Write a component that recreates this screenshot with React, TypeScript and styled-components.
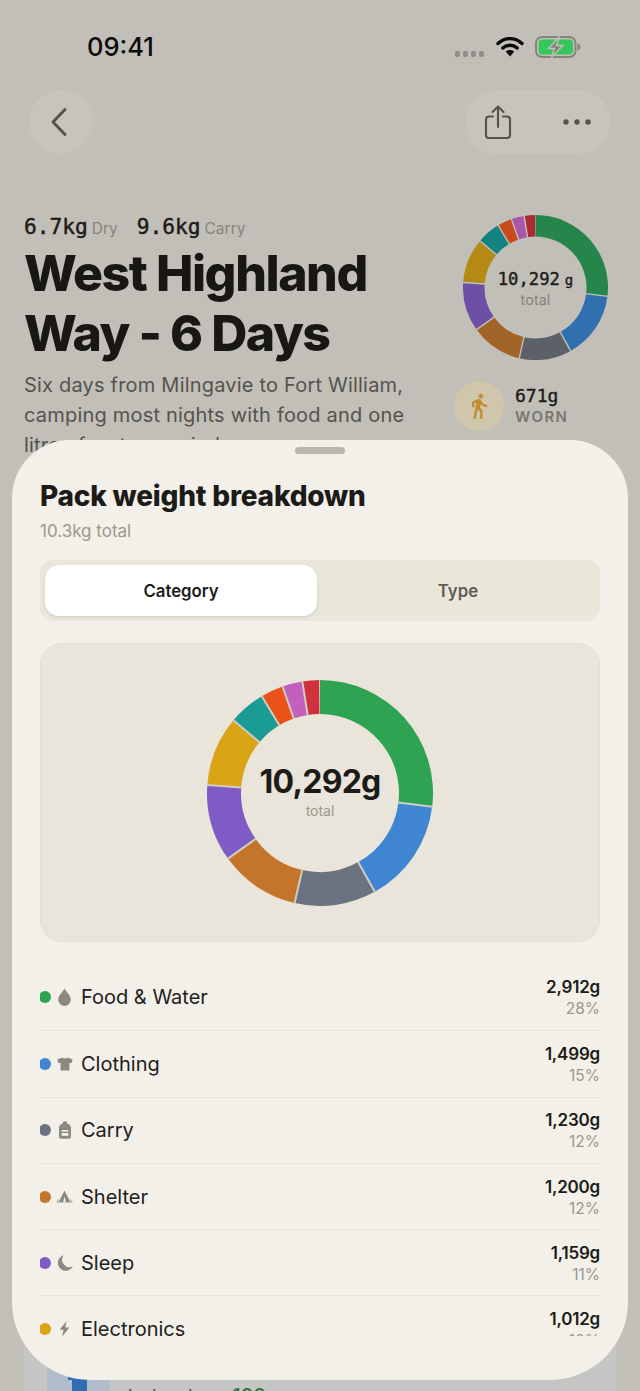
import styled, { createGlobalStyle } from 'styled-components';
import { MdDirectionsWalk } from 'react-icons/md';

const GlobalStyle = createGlobalStyle`
  html, body {
    margin: 0;
    padding: 0;
    background: #c1bfb7;
  }
  * {
    box-sizing: border-box;
  }
`;

const sans = `Inter, "Liberation Sans", sans-serif`;
const mono = `"DejaVu Sans Mono", "Liberation Mono", monospace`;

const Page = styled.div`
  position: relative;
  width: 640px;
  height: 1391px;
  overflow: hidden;
  background: #c1bfb7;
  font-family: ${sans};
  color: #1c1b18;
`;

const StatusBar = styled.div`
  height: 90px;
  display: flex;
  justify-content: space-between;
  align-items: flex-start;
  padding: 31px 59px 0 87px;
`;

const Time = styled.div`
  font-size: 25.5px;
  line-height: 32px;
  font-weight: 500;
  color: #0a0a0a;
`;

const StatusIcons = styled.div`
  display: flex;
  align-items: flex-start;
  gap: 11px;
  padding-top: 5px;
`;

const SignalDots = styled.div`
  display: flex;
  gap: 2.5px;
  margin-top: 15px;
  margin-right: 1px;
  & > span {
    width: 5.5px;
    height: 6px;
    border-radius: 2px;
    background: #8f8d87;
  }
`;

const NavBar = styled.div`
  height: 64px;
  display: flex;
  justify-content: space-between;
  padding: 0 30px 0 29px;
`;

const GlassButton = styled.div`
  height: 64px;
  border-radius: 32px;
  background: #c7c4bd;
  display: flex;
  align-items: center;
`;

const BackButton = styled(GlassButton)`
  width: 64px;
  justify-content: center;
  padding-right: 4px;
`;

const ActionPill = styled(GlassButton)`
  width: 145px;
  justify-content: space-between;
  padding: 0 19px 0 19px;
`;

const Hero = styled.div`
  display: flex;
  margin-top: 61px;
  padding-left: 24px;
`;

const HeroText = styled.div`
  width: 430px;
  flex: none;
`;

const Stats = styled.div`
  display: flex;
  align-items: baseline;
  height: 24px;
  line-height: 24px;
  gap: 19px;
`;

const Stat = styled.div`
  display: flex;
  align-items: baseline;
  gap: 4px;
`;

const StatValue = styled.span`
  font-family: ${mono};
  font-size: 21.2px;
  -webkit-text-stroke: 0.45px #1c1b18;
  color: #1c1b18;
`;

const StatLabel = styled.span`
  font-size: 15.5px;
  color: #86847d;
`;

const Title = styled.h1`
  margin: 5px 0 0;
  font-size: 50px;
  line-height: 59.5px;
  font-weight: 800;
  letter-spacing: -1.45px;
  color: #181713;
`;

const Description = styled.p`
  margin: 7px 0 0;
  width: 400px;
  font-size: 20px;
  line-height: 30px;
  letter-spacing: 0.2px;
  color: #55534e;
`;

const HeroSide = styled.div`
  flex: 1;
  display: flex;
  flex-direction: column;
`;

const SmallChart = styled.div`
  margin-left: 9px;
`;

const Worn = styled.div`
  display: flex;
  align-items: center;
  gap: 11px;
  margin-top: 21px;
`;

const WornBadge = styled.div`
  width: 50px;
  height: 50px;
  border-radius: 50%;
  background: #d0c6ab;
  color: #c08f33;
  display: flex;
  align-items: center;
  justify-content: center;
  font-size: 28px;
`;

const WornWeight = styled.div`
  font-family: ${mono};
  font-size: 18px;
  line-height: 22px;
  -webkit-text-stroke: 0.4px #1c1b18;
  color: #1c1b18;
`;

const WornLabel = styled.div`
  font-size: 15px;
  line-height: 20px;
  font-weight: 600;
  letter-spacing: 1.4px;
  color: #787670;
`;

const GearCard = styled.div`
  margin: 839px 24px 0;
  background: #c5c5c4;
  display: flex;
  gap: 18px;
  padding-left: 23px;
`;

const GearThumb = styled.div`
  width: 63px;
  height: 120px;
  flex: none;
  background: #b1bccc;
  display: flex;
  justify-content: center;
  padding-top: 73px;
`;

const GearName = styled.div`
  margin-top: 85px;
  font-size: 17px;
  line-height: 24px;
  color: #3e3d3a;
  display: flex;
  gap: 19px;
  & > b {
    color: #2f7a49;
    font-weight: 600;
    font-size: 19px;
  }
`;

const Sheet = styled.section`
  position: absolute;
  left: 12px;
  top: 440px;
  width: 616px;
  height: 940px;
  border-radius: 58px 58px 78px 78px;
  background: #f2f0e8;
  padding: 7px 28px 44px;
  display: flex;
  flex-direction: column;
`;

const Handle = styled.div`
  width: 50px;
  height: 7px;
  border-radius: 4px;
  background: #b9b7af;
  align-self: center;
`;

const SheetTitle = styled.h2`
  margin: 24px 0 0;
  font-size: 28px;
  line-height: 36px;
  font-weight: 800;
  letter-spacing: -0.2px;
  color: #1c1b18;
`;

const SheetSub = styled.div`
  margin-top: 6px;
  font-size: 17px;
  line-height: 22px;
  color: #9a988f;
`;

const Segmented = styled.div`
  margin-top: 18px;
  height: 61px;
  border-radius: 14px;
  background: #e9e6da;
  padding: 5px;
  display: flex;
`;

const Segment = styled.div<{ $active?: boolean }>`
  display: flex;
  align-items: center;
  justify-content: center;
  font-size: 16.8px;
  font-weight: 600;
  border-radius: 14px;
  ${(p) =>
    p.$active
      ? `
    width: 272px;
    background: #fff;
    color: #1c1b18;
    box-shadow: 0 1px 3px rgba(70, 60, 30, 0.14);
  `
      : `
    flex: 1;
    padding-left: 4px;
    color: #5e5c55;
  `}
`;

const ChartCard = styled.div`
  margin-top: 22px;
  height: 299px;
  flex: none;
  border-radius: 22px;
  background: #e9e5da;
  border: 1px solid #e2ded1;
  display: flex;
  align-items: center;
  justify-content: center;
`;

const DonutWrap = styled.div<{ $size: number }>`
  display: grid;
  width: ${(p) => p.$size}px;
  height: ${(p) => p.$size}px;
  & > * {
    grid-area: 1 / 1;
  }
`;

const DonutCenter = styled.div`
  display: flex;
  flex-direction: column;
  align-items: center;
  justify-content: center;
`;

const BigTotal = styled.div`
  font-size: 32px;
  line-height: 38px;
  font-weight: 700;
  letter-spacing: -0.8px;
  margin-top: -2px;
  color: #1c1b18;
`;

const BigTotalLabel = styled.div`
  font-size: 14px;
  line-height: 20px;
  color: #9a988f;
`;

const SmallTotal = styled.div`
  font-family: ${mono};
  font-size: 17.2px;
  line-height: 20px;
  -webkit-text-stroke: 0.4px #1c1b18;
  margin-top: 4px;
  color: #1c1b18;
  & > small {
    font-size: 14px;
    margin-left: 5px;
  }
`;

const SmallTotalLabel = styled.div`
  font-size: 14.5px;
  line-height: 20px;
  color: #85837d;
`;

const Breakdown = styled.div`
  margin-top: 22px;
  flex: 1;
  min-height: 0;
  overflow: hidden;
`;

const Row = styled.div`
  height: 66.3px;
  display: flex;
  align-items: center;
  border-top: 1px solid #e8e5dc;
  &:first-child {
    border-top: none;
  }
`;

const Dot = styled.span<{ $color: string }>`
  width: 12px;
  height: 12px;
  margin-left: -1px;
  border-radius: 50%;
  background: ${(p) => p.$color};
  flex: none;
`;

const RowIcon = styled.span`
  width: 17px;
  height: 18px;
  margin-left: 5px;
  flex: none;
  color: #8b8a82;
  display: flex;
  align-items: center;
  justify-content: center;
`;

const RowName = styled.span`
  margin-left: 8px;
  flex: 1;
  font-size: 20px;
  color: #22211d;
`;

const RowValues = styled.div`
  text-align: right;
  padding-top: 2px;
`;

const RowWeight = styled.div`
  font-size: 17px;
  line-height: 22px;
  font-weight: 600;
  letter-spacing: -0.2px;
  color: #1c1b18;
`;

const RowShare = styled.div`
  font-size: 15.5px;
  line-height: 22px;
  color: #9a988f;
`;

type DonutProps = { size: number; hole: number; colors: string[]; gap: string; gapWidth: number };

// angles read off the chart, in degrees from twelve o'clock
const stops = [0, 97, 151, 193, 234.5, 274, 310, 329, 340.6, 351, 359.6];

const polar = (r: number, deg: number, c: number) => {
  const a = ((deg - 90) * Math.PI) / 180;
  return `${(c + r * Math.cos(a)).toFixed(2)} ${(c + r * Math.sin(a)).toFixed(2)}`;
};

function Donut({ size, hole, colors, gap, gapWidth }: DonutProps) {
  const c = size / 2;
  return (
    <svg width={size} height={size} viewBox={`0 0 ${size} ${size}`}>
      {colors.map((color, i) => {
        const from = stops[i];
        const to = stops[i + 1];
        const large = to - from > 180 ? 1 : 0;
        const d = `M${polar(c, from, c)} A${c} ${c} 0 ${large} 1 ${polar(c, to, c)} L${polar(hole, to, c)} A${hole} ${hole} 0 ${large} 0 ${polar(hole, from, c)} Z`;
        return <path key={color} d={d} fill={color} />;
      })}
      {stops.slice(1, -1).map((deg) => {
        return (
          <path
            key={deg}
            d={`M${polar(hole - 0.5, deg, c)} L${polar(c + 0.5, deg, c)}`}
            stroke={gap}
            strokeWidth={gapWidth}
          />
        );
      })}
    </svg>
  );
}

const DropIcon = () => (
  <svg width="13" height="18" viewBox="0 0 13 18">
    <path d="M6.5 0.5C8 3.5 12.8 7.5 12.8 11.6A6.3 6.3 0 0 1 0.2 11.6C0.2 7.5 5 3.5 6.5 0.5Z" fill="currentColor" />
  </svg>
);

const ShirtIcon = () => (
  <svg width="16" height="14" viewBox="0 0 16 14">
    <path d="M5.2 0.5C6 1.7 10 1.7 10.8 0.5L15.6 2.4L14.6 6H12.4V13.5H3.6V6H1.4L0.4 2.4Z" fill="currentColor" />
  </svg>
);

const PackIcon = () => (
  <svg width="12" height="18" viewBox="0 0 12 18">
    <path d="M4 2.4V1.2A2 1 0 0 1 8 1.2V2.4C10.4 2.9 12 4.4 12 6.8V15.5A2.2 2.2 0 0 1 9.8 17.7H2.2A2.2 2.2 0 0 1 0 15.5V6.8C0 4.4 1.6 2.9 4 2.4Z" fill="currentColor" />
    <rect x="2.6" y="9" width="6.8" height="1.6" fill="#f2f0e8" />
    <rect x="2.6" y="12" width="6.8" height="2.8" fill="#f2f0e8" />
  </svg>
);

const TentIcon = () => (
  <svg width="17" height="13" viewBox="0 0 17 13">
    <path d="M8.5 0.5L14.6 12.4H2.4Z" fill="currentColor" />
    <path d="M8.5 6.5L10 12.4H7Z" fill="#f2f0e8" />
    <path d="M3 8.5L0 12.6H2ZM14 8.5L17 12.6H15Z" fill="currentColor" opacity="0.75" />
  </svg>
);

const MoonIcon = () => (
  <svg width="16" height="16" viewBox="0 0 16 16">
    <path d="M6.6 0.2A7.9 7.9 0 1 0 15.9 11.2A7.4 7.4 0 0 1 6.6 0.2Z" fill="currentColor" />
  </svg>
);

const BoltIcon = () => (
  <svg width="11" height="16" viewBox="0 0 11 16">
    <path d="M7.6 0L0.6 8.8H4.6L3 15.8L10.4 6.6H6.2Z" fill="currentColor" />
  </svg>
);

const categories = [
  { name: 'Food & Water', weight: '2,912g', share: '28%', color: '#2ea352', icon: <DropIcon /> },
  { name: 'Clothing', weight: '1,499g', share: '15%', color: '#3f85d1', icon: <ShirtIcon /> },
  { name: 'Carry', weight: '1,230g', share: '12%', color: '#6b7280', icon: <PackIcon /> },
  { name: 'Shelter', weight: '1,200g', share: '12%', color: '#c4752b', icon: <TentIcon /> },
  { name: 'Sleep', weight: '1,159g', share: '11%', color: '#7e5bc5', icon: <MoonIcon /> },
  { name: 'Electronics', weight: '1,012g', share: '10%', color: '#d9a516', icon: <BoltIcon /> },
];

const brightColors = ['#2ea352', '#3f85d1', '#6b7280', '#c4752b', '#7e5bc5', '#d9a516', '#1a9b94', '#ea5219', '#c25fbf', '#cf323c'];
const dimColors = ['#26854a', '#3070ae', '#5c6068', '#a36427', '#6d4fa6', '#b48a14', '#14827f', '#c84a1a', '#a857a8', '#ab2b33'];

export default function App() {
  return (
    <>
      <GlobalStyle />
      <Page>
        <StatusBar>
          <Time>09:41</Time>
          <StatusIcons>
            <SignalDots>
              <span />
              <span />
              <span />
              <span />
            </SignalDots>
            <svg width="28" height="21" viewBox="0 0 28 21">
              <path d="M2 7.5C9 1 19 1 26 7.5" fill="none" stroke="#0a0a0a" strokeWidth="3.4" strokeLinecap="round" />
              <path d="M6.8 12C11 8.3 17 8.3 21.2 12" fill="none" stroke="#0a0a0a" strokeWidth="3.4" strokeLinecap="round" />
              <path d="M9.8 15.6C12 13.6 16 13.6 18.2 15.6L14 20.6Z" fill="#0a0a0a" />
            </svg>
            <svg width="46" height="22" viewBox="0 0 46 22">
              <rect x="1" y="1" width="39.5" height="20" rx="6" fill="none" stroke="#85847e" strokeWidth="2" />
              <rect x="3.6" y="3.6" width="34.4" height="14.8" rx="3.6" fill="#35c75a" />
              <path d="M42.5 7.5C44.5 8 45.5 9.5 45.5 11C45.5 12.5 44.5 14 42.5 14.5Z" fill="#85847e" />
              <path d="M24.5 0.5L13.5 12.5H19.5L16.5 21.5L28 9.5H21.5Z" fill="#85847e" stroke="#c1bfb7" strokeWidth="1.4" />
            </svg>
          </StatusIcons>
        </StatusBar>

        <NavBar>
          <BackButton>
            <svg width="18" height="30" viewBox="0 0 18 30">
              <path d="M15 2.5L3 15L15 27.5" fill="none" stroke="#55524c" strokeWidth="2.9" strokeLinecap="round" strokeLinejoin="round" />
            </svg>
          </BackButton>
          <ActionPill>
            <svg width="28" height="36" viewBox="0 0 28 36">
              <path d="M9 12.5H5A3 3 0 0 0 2 15.5V31A3 3 0 0 0 5 34H23A3 3 0 0 0 26 31V15.5A3 3 0 0 0 23 12.5H19" fill="none" stroke="#55524c" strokeWidth="2.1" strokeLinecap="round" />
              <path d="M14 23V2.5M8.5 8L14 2.5L19.5 8" fill="none" stroke="#55524c" strokeWidth="2.1" strokeLinecap="round" strokeLinejoin="round" />
            </svg>
            <svg width="28" height="8" viewBox="0 0 28 8">
              <circle cx="3" cy="4" r="2.7" fill="#55524c" />
              <circle cx="14" cy="4" r="2.7" fill="#55524c" />
              <circle cx="25" cy="4" r="2.7" fill="#55524c" />
            </svg>
          </ActionPill>
        </NavBar>

        <Hero>
          <HeroText>
            <Stats>
              <Stat>
                <StatValue>6.7kg</StatValue>
                <StatLabel>Dry</StatLabel>
              </Stat>
              <Stat>
                <StatValue>9.6kg</StatValue>
                <StatLabel>Carry</StatLabel>
              </Stat>
            </Stats>
            <Title>
              West Highland
              <br />
              Way - 6 Days
            </Title>
            <Description>
              Six days from Milngavie to Fort William, camping most nights with food and one litre of water carried.
            </Description>
          </HeroText>
          <HeroSide>
            <SmallChart>
              <DonutWrap $size={145}>
                <Donut size={145} hole={51} colors={dimColors} gap="#c1bfb7" gapWidth={1.4} />
                <DonutCenter>
                  <SmallTotal>
                    10,292<small>g</small>
                  </SmallTotal>
                  <SmallTotalLabel>total</SmallTotalLabel>
                </DonutCenter>
              </DonutWrap>
            </SmallChart>
            <Worn>
              <WornBadge>
                <MdDirectionsWalk />
              </WornBadge>
              <div>
                <WornWeight>671g</WornWeight>
                <WornLabel>WORN</WornLabel>
              </div>
            </Worn>
          </HeroSide>
        </Hero>

        <GearCard>
          <GearThumb>
            <svg width="24" height="40" viewBox="0 0 24 40">
              <path d="M1 0H23V8H20V40H5V8H1Z" fill="#2f6eb3" />
            </svg>
          </GearThumb>
          <GearName>
            Icebreaker <b>100</b>
          </GearName>
        </GearCard>

        <Sheet>
          <Handle />
          <SheetTitle>Pack weight breakdown</SheetTitle>
          <SheetSub>10.3kg total</SheetSub>
          <Segmented>
            <Segment $active>Category</Segment>
            <Segment>Type</Segment>
          </Segmented>
          <ChartCard>
            <DonutWrap $size={226}>
              <Donut size={226} hole={79} colors={brightColors} gap="#cfccc1" gapWidth={2} />
              <DonutCenter>
                <BigTotal>10,292g</BigTotal>
                <BigTotalLabel>total</BigTotalLabel>
              </DonutCenter>
            </DonutWrap>
          </ChartCard>
          <Breakdown>
            {categories.map((item) => (
              <Row key={item.name}>
                <Dot $color={item.color} />
                <RowIcon>{item.icon}</RowIcon>
                <RowName>{item.name}</RowName>
                <RowValues>
                  <RowWeight>{item.weight}</RowWeight>
                  <RowShare>{item.share}</RowShare>
                </RowValues>
              </Row>
            ))}
          </Breakdown>
        </Sheet>
      </Page>
    </>
  );
}
